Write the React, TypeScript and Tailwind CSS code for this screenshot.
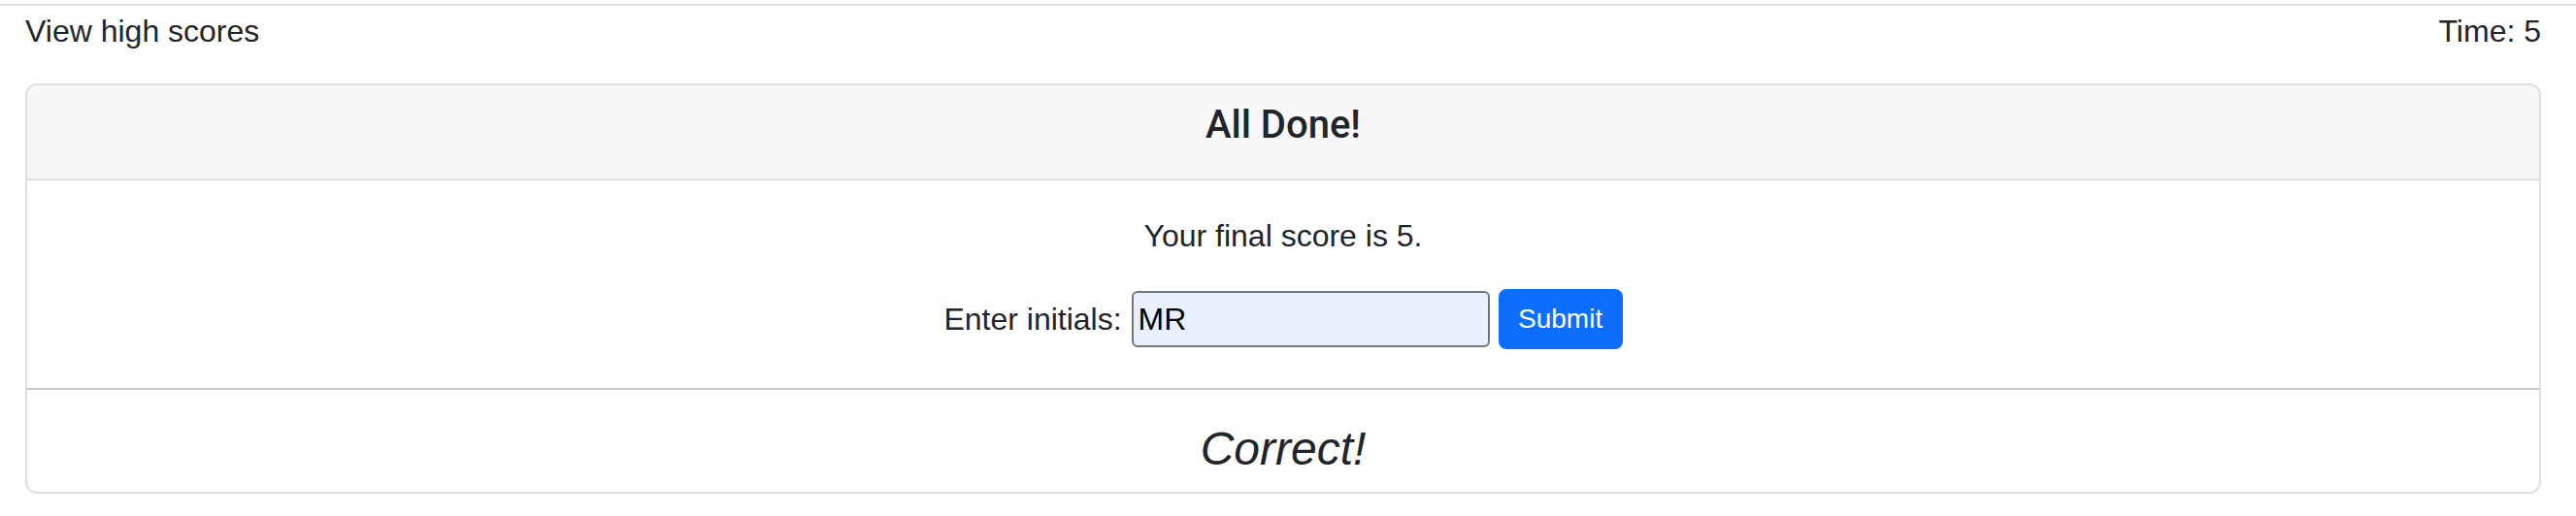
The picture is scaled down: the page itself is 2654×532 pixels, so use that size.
export default function App() {
  return (
    <div className="min-h-screen bg-white text-[#212529] font-['Liberation_Sans',Arial,sans-serif]">
      {/* top rule */}
      <div className="pt-[4px]">
        <div className="h-[2px] bg-[#dcdcdc]" />
      </div>

      <div className="pl-[26px] pr-[36px]">
        {/* Nav row */}
        <div className="mt-[2px] flex justify-between items-center h-[48px] text-[32px] leading-[48px]">
          <a className="cursor-pointer">View high scores</a>
          <span>Time: 5</span>
        </div>

        {/* Card */}
        <div className="mt-[30px] border-2 border-[#dfdfdf] rounded-[12px] overflow-hidden">
          <div className="bg-[#f7f7f7] border-b-2 border-[#dfdfdf] pt-[17px] pb-[31px] text-center">
            <h5 className="text-[40px] leading-[48px] font-medium font-['Roboto','Liberation_Sans',sans-serif]">
              All Done!
            </h5>
          </div>

          <div className="pt-[33px] pb-[40px] flex flex-col items-center">
            <p className="text-[32px] leading-[48px]">Your final score is 5.</p>
            <form
              className="mt-[31px] h-[62px] flex items-center"
              onSubmit={(e) => e.preventDefault()}
            >
              <label htmlFor="initials" className="text-[32px] leading-[48px]">
                Enter initials:
              </label>
              <input
                id="initials"
                type="text"
                defaultValue="MR"
                className="ml-[10px] w-[369px] h-[58px] px-[5px] text-[32px] text-black bg-[#e8f0fe] border-2 border-[#767676] rounded-[6px] outline-none"
              />
              <button
                type="submit"
                className="ml-[9px] w-[128px] h-[62px] bg-[#0d6efd] text-white text-[28px] leading-[42px] rounded-[8px]"
              >
                Submit
              </button>
            </form>
          </div>

          <div className="border-t-2 border-[#c9c9c9] pt-[33px] pb-[16px] text-center">
            <p className="text-[48px] leading-[56px] italic">Correct!</p>
          </div>
        </div>
      </div>
    </div>
  );
}
